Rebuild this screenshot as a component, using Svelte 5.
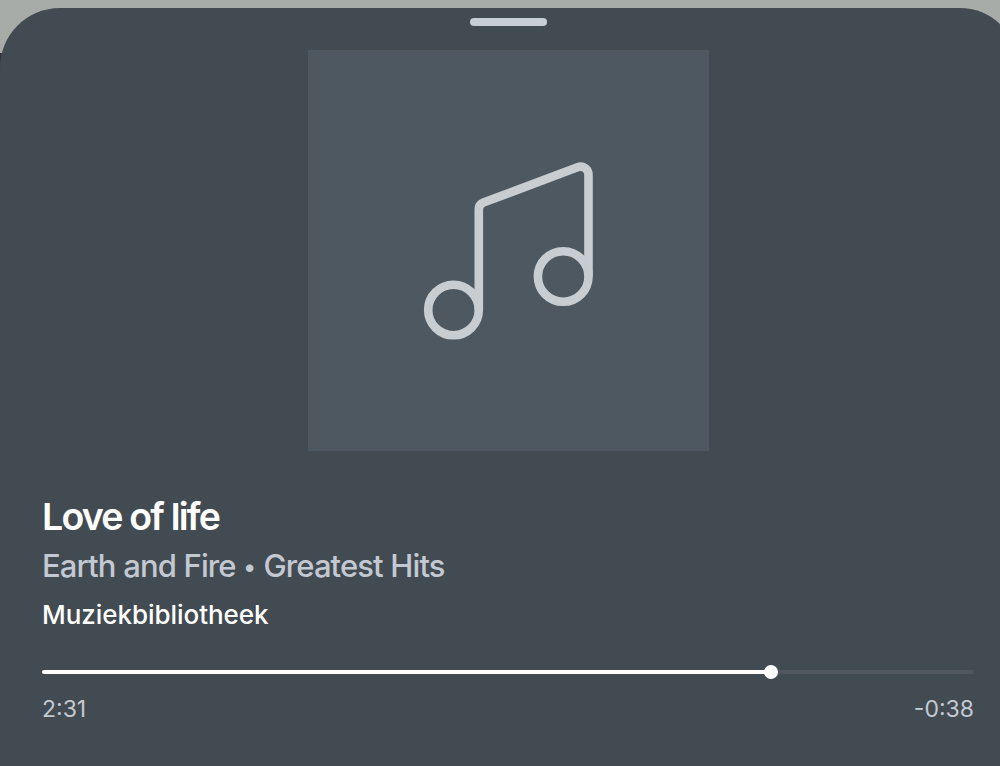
<script>
  const track = {
    title: 'Love of life',
    artist: 'Earth and Fire',
    album: 'Greatest Hits',
    source: 'Muziekbibliotheek'
  };

  // Playback times in seconds
  let elapsed = $state(151);
  let duration = $state(189);

  let progress = $state(78.2);

  function formatTime(seconds) {
    const minutes = Math.floor(seconds / 60);
    return `${minutes}:${String(seconds % 60).padStart(2, '0')}`;
  }
</script>

<main class="screen">
  <section class="sheet">
    <div class="grabber"></div>

    <div class="artwork">
      <svg width="200" height="200" viewBox="0 0 200 200" fill="none" stroke="currentColor" stroke-width="8.6">
        <circle cx="43.5" cy="160" r="25.3" />
        <circle cx="153.2" cy="126.5" r="25.3" />
        <path d="M68.8 160V59.5Q68.8 54.5 73.5 52.6L167.5 17.2C173 15.2 178.5 18.8 178.5 25V126.5" />
      </svg>
    </div>

    <div class="details">
      <h1>{track.title}</h1>
      <p class="artist">{track.artist} <span class="dot">•</span> {track.album}</p>
      <p class="source">{track.source}</p>

      <div class="slider">
        <div class="fill" style="width: {progress}%">
          <span class="knob"></span>
        </div>
      </div>

      <div class="times">
        <span>{formatTime(elapsed)}</span>
        <span>-{formatTime(duration - elapsed)}</span>
      </div>
    </div>
  </section>
</main>

<style>
  :global(body) {
    background: #434a51;
    overflow: hidden;
  }

  .screen {
    box-sizing: border-box;
    width: 1000px;
    height: 766px;
    padding-top: 8px;
    overflow: hidden;
    background: linear-gradient(#a7aca8 0 53px, #30363a 53px);
    font-family: Inter, "Liberation Sans", sans-serif;
  }

  /* The sheet is slightly wider than the visible screen */
  .sheet {
    box-sizing: border-box;
    width: 1016px;
    height: 758px;
    padding-top: 10px;
    display: flex;
    flex-direction: column;
    align-items: center;
    border-radius: 60px 56px 0 0 / 60px 54px 0 0;
    background: #434b52;
  }

  .grabber {
    width: 77px;
    height: 7.5px;
    border-radius: 4px;
    background: #c8ced6;
    flex-shrink: 0;
  }

  .artwork {
    width: 401px;
    height: 401px;
    margin-top: 24.5px;
    display: flex;
    align-items: center;
    justify-content: center;
    flex-shrink: 0;
    background: #4e5860;
    color: #c8cdd1;
  }

  .artwork svg {
    margin: -2px 0 0 4px;
  }

  .details {
    box-sizing: border-box;
    width: 100%;
    padding: 42px 42px 0;
  }

  h1,
  p {
    margin: 0;
    white-space: nowrap;
  }

  h1 {
    color: #ffffff;
    font-size: 37.5px;
    font-weight: 600;
    line-height: 48px;
    letter-spacing: -1.8px;
  }

  .artist {
    color: #c3c9d3;
    font-size: 31px;
    font-weight: 500;
    line-height: 50px;
    letter-spacing: -0.9px;
    word-spacing: 0.3px;
  }

  .dot {
    margin-right: 0.6px;
    font-size: 24px;
    line-height: 1;
    vertical-align: 2px;
  }

  .source {
    color: #ffffff;
    font-size: 26px;
    font-weight: 500;
    line-height: 48px;
    letter-spacing: -0.05px;
  }

  .slider {
    height: 4px;
    margin-top: 31px;
    border-radius: 2px;
    background: #50565e;
  }

  .fill {
    position: relative;
    height: 100%;
    border-radius: 2px;
    background: #ffffff;
  }

  .knob {
    position: absolute;
    top: -5px;
    right: -7px;
    width: 14px;
    height: 14px;
    border-radius: 50%;
    background: #ffffff;
  }

  .times {
    display: flex;
    justify-content: space-between;
    margin-top: 21px;
    color: #c3c9d3;
    font-size: 23px;
    line-height: 28px;
  }
</style>
